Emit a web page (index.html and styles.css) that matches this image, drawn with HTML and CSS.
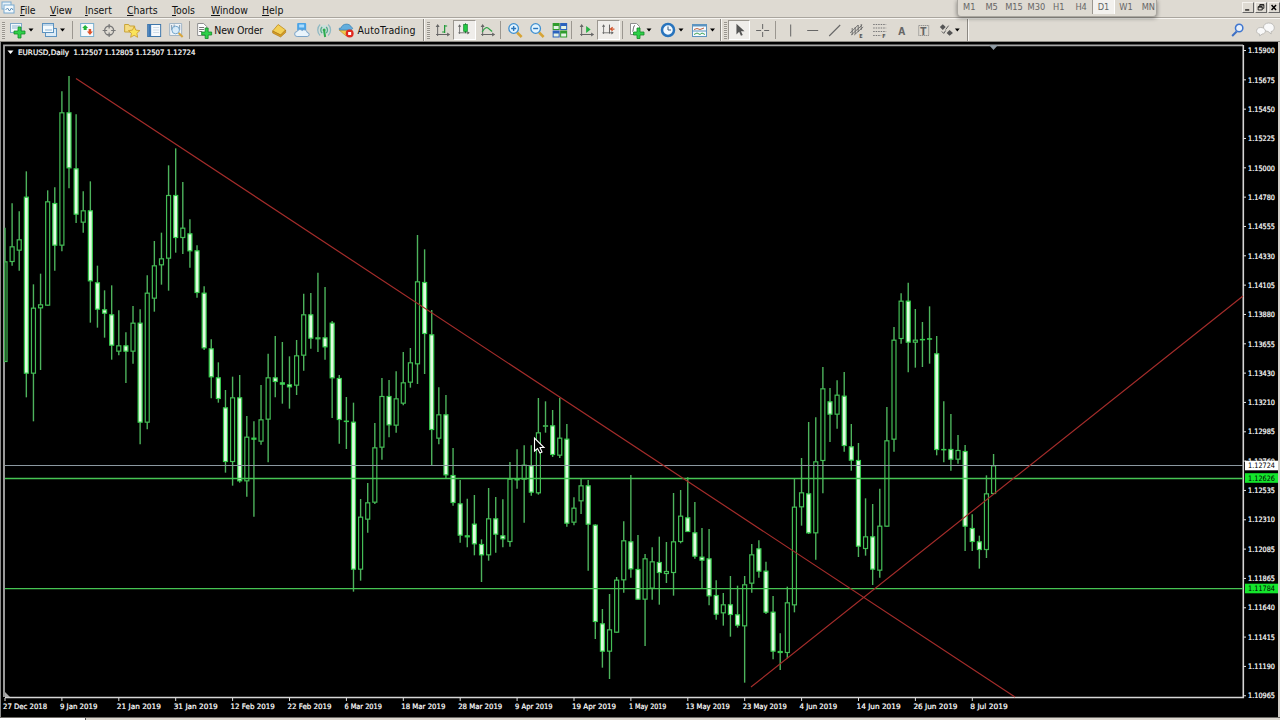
FILE: index.html
```html
<!DOCTYPE html>
<html lang="en">
<head>
  <meta charset="UTF-8" />
  <meta name="viewport" content="width=device-width, initial-scale=1" />
  <title>EURUSD,Daily</title>
  <link rel="stylesheet" href="styles.css">
</head>
<body>
  <div class="terminal">
    <nav class="menubar">
      <svg class="app-icon" viewBox="0 0 14 14">
        <rect x="1" y="1" width="9" height="7" fill="#e8f3fa" stroke="#79a9cf"/>
        <rect x="3" y="4" width="10" height="8" fill="#f4fafd" stroke="#79a9cf"/>
        <path d="M4.500 9l2-2 2 3 2-3 1.500 2" fill="none" stroke="#5b8db8"/>
      </svg>
      <span class="menu m-file"><u>F</u>ile</span>
      <span class="menu m-view"><u>V</u>iew</span>
      <span class="menu m-insert"><u>I</u>nsert</span>
      <span class="menu m-charts"><u>C</u>harts</span>
      <span class="menu m-tools"><u>T</u>ools</span>
      <span class="menu m-window"><u>W</u>indow</span>
      <span class="menu m-help"><u>H</u>elp</span>
      <div class="win-buttons">
        <svg viewBox="0 0 12 11"><path d="M2.500 8.500h5" stroke="#000" stroke-width="1.500"/></svg>
        <svg viewBox="0 0 12 11"><path d="M4.500 4V2h5v4.500H8M2.500 4.500h5v4h-5zM2.500 5h5M4.500 2.500h5" fill="none" stroke="#000"/></svg>
        <svg viewBox="0 0 12 11"><path d="M3 2.500l5.500 6M8.500 2.500l-5.500 6" stroke="#000" stroke-width="1.800"/></svg>
      </div>
    </nav>

    <div class="toolbar">
      <div class="group g-files">
        <i class="grip"></i>
        <svg class="drop" viewBox="0 0 32 22">
          <rect x="4.500" y="4.500" width="11" height="9" fill="#f3f9fc" stroke="#7fa8c8"/>
          <path d="M6 7h8M6 9h5" stroke="#8fb4d0"/>
          <path d="M12 8h3v4h4v3h-4v4h-3v-4H8v-3h4z" fill="#2fd04a" stroke="#128a26" stroke-width=".8"/>
          <path d="M22.500 9.500h5l-2.500 3z"/>
        </svg>
        <svg class="drop" viewBox="0 0 32 22">
          <rect x="7.500" y="9.500" width="11" height="8" fill="#dcebf6" stroke="#5d93c0"/>
          <rect x="4.500" y="4.500" width="11" height="9" fill="#f4fafd" stroke="#5d93c0"/>
          <path d="M5 6h10M7 11h7" stroke="#8ab4d6"/>
          <path d="M22 9.500h5l-2.500 3z"/>
        </svg>
      </div>
      <div class="group g-panels">
        <i class="sep"></i>
        <svg class="tool" viewBox="0 0 22 22">
          <rect x="4.500" y="4.500" width="13" height="13" fill="#f7fbfd" stroke="#7db0cf"/>
          <path d="M9 6l3 3h-1.500v2h-3V9H6z" fill="#22b53a"/>
          <path d="M12.500 10h2.500v2.500h1.800L13.800 16l-3-3.500h1.700z" fill="#e0522a"/>
        </svg>
        <svg class="tool" viewBox="0 0 22 22">
          <circle cx="11" cy="11.500" r="4.500" fill="none" stroke="#777" stroke-width="1.300"/>
          <path d="M11 5v4.500M11 13.500V18M4.500 11.500H9M13 11.500h4.500" stroke="#777" stroke-width="1.200"/>
        </svg>
        <svg class="tool" viewBox="0 0 22 22">
          <path d="M3.500 5.500h4l1 1.500h5v6h-10z" fill="#f5dc82" stroke="#c9a437"/>
          <path d="M13 7.500l1.700 3.600 4 .5-3 2.700.8 4-3.500-2-3.500 2 .8-4-3-2.700 4-.5z" fill="#fbe45b" stroke="#c9982a" stroke-width=".8"/>
        </svg>
        <svg class="tool" viewBox="0 0 22 22">
          <rect x="4.500" y="5.500" width="13" height="12" fill="#f7fafd" stroke="#3f77ab"/>
          <rect x="5" y="6" width="3" height="11" fill="#3d78b5"/>
          <path d="M10 8.500h6M10 11h6M10 13.500h6" stroke="#cfdce8"/>
        </svg>
        <svg class="tool" viewBox="0 0 22 22">
          <path d="M4.500 4.500h12v12h-12z" fill="#eef3f7" stroke="#a2b6c6"/>
          <path d="M6.500 6v5M9 5.500v4M14.500 6v5" stroke="#7d98ae"/>
          <circle cx="10.500" cy="11" r="3.800" fill="#d2eafa" fill-opacity=".8" stroke="#74a6cc"/>
          <path d="M13.500 14l4 4" stroke="#d7a53c" stroke-width="2"/>
        </svg>
      </div>
      <div class="group g-trade">
        <i class="sep"></i>
        <svg class="tool" viewBox="0 0 22 22">
          <path d="M4.500 4.500h6l3 3v9h-9z" fill="#fff" stroke="#8f8f8f"/>
          <path d="M6 8.500h5M6 10.500h5M6 12.500h3" stroke="#777"/>
          <path d="M12 9h3v4h3.500v3H15v3.500h-3V16H8.500v-3H12z" fill="#2fd04a" stroke="#128a26" stroke-width=".8"/>
        </svg>
        <span class="label l-order">New Order</span>
        <svg class="tool" viewBox="0 0 22 22">
          <path d="M4.500 12l5.500-6.500 7.500 5.500-5 5z" fill="#f3cf55" stroke="#bd8a1c" stroke-width=".8"/>
          <path d="M4.500 12l8 4 5-5v2.500L12.500 18l-8-4z" fill="#d99e22" stroke="#a8761a" stroke-width=".6"/>
        </svg>
        <svg class="tool" viewBox="0 0 22 22">
          <rect x="6" y="4" width="9" height="8" rx="1" fill="#4ca4e6"/>
          <path d="M8 5.500h5v3H8z" fill="#a8dcff"/>
          <path d="M6 17.500a2.500 2.500 0 010-5 3 3 0 015-1 3 3 0 015 2 2 2 0 010 4z" fill="#eaf4fb" stroke="#6f9cc4" stroke-width=".9"/>
        </svg>
        <svg class="tool" viewBox="0 0 22 22" fill="none" stroke-width="1.300">
          <circle cx="11" cy="11" r="5" fill="#c9e0dc"/>
          <path d="M7 5.500a7.500 7.500 0 000 11M15 5.500a7.500 7.500 0 010 11" stroke="#8fb9c4"/>
          <path d="M9 8a4 4 0 000 6M13 8a4 4 0 010 6" stroke="#58a98a"/>
          <circle cx="11" cy="11" r="1.500" fill="#2eab4c"/>
          <path d="M11 12l1 6" stroke="#2eab4c" stroke-width="2"/>
        </svg>
        <svg class="tool" viewBox="0 0 22 22">
          <path d="M4 11l7 6 6-6z" fill="#f1c84a" stroke="#bc9127" stroke-width=".7"/>
          <path d="M6 9c1-5 9-5 10-1 3 1 1 3-2 3H6c-3 0-3-2 0-2z" fill="#63aede" stroke="#3b7fb0" stroke-width=".7"/>
          <circle cx="14.500" cy="14.500" r="4" fill="#df2a20"/>
          <rect x="13" y="13" width="3" height="3" fill="#fff"/>
        </svg>
        <span class="label l-auto">AutoTrading</span>
      </div>
      <div class="group g-types">
        <i class="edge"></i><i class="grip"></i>
        <svg class="tool" viewBox="0 0 22 22">
          <use href="#axes"/>
          <path d="M13.500 6v8M13.500 7h2.500M11 13h2.500" stroke="#1d9a36" stroke-width="1.200"/>
        </svg>
        <svg class="tool active" viewBox="1 1 20 20">
          <use href="#axes"/>
          <path d="M12.500 3.500v11" stroke="#12802a"/>
          <rect x="10.500" y="5" width="4" height="7.500" fill="#22cc44" stroke="#12802a" stroke-width=".8"/>
        </svg>
        <svg class="tool" viewBox="0 0 22 22">
          <use href="#axes"/>
          <path d="M6 13q4-7 7-3l3 2.500" fill="none" stroke="#2da545" stroke-width="1.200"/>
        </svg>
      </div>
      <div class="group g-zoom">
        <i class="sep"></i>
        <svg class="tool" viewBox="0 0 22 22">
          <path d="M13 13.500l4.500 4.500" stroke="#d7a436" stroke-width="2.500"/>
          <circle cx="9.500" cy="9.500" r="4.800" fill="#e2f4ff" stroke="#3e8fd0" stroke-width="1.300"/>
          <path d="M7 9.500h5M9.500 7v5" stroke="#2a76bb" stroke-width="1.400"/>
        </svg>
        <svg class="tool" viewBox="0 0 22 22">
          <path d="M13 13.500l4.500 4.500" stroke="#d7a436" stroke-width="2.500"/>
          <circle cx="9.500" cy="9.500" r="4.800" fill="#e2f4ff" stroke="#3e8fd0" stroke-width="1.300"/>
          <path d="M7 9.500h5" stroke="#2a76bb" stroke-width="1.400"/>
        </svg>
        <svg class="tool" viewBox="0 0 22 22">
          <path d="M3.500 4h7v7h-7zM11 11.500h7v7h-7z" fill="#2f9c2c"/>
          <path d="M11 4h7v7h-7zM3.500 11.500h7v7h-7z" fill="#2a62bd"/>
          <path d="M4.500 7h5v3h-5zM12 7h5v3h-5zM4.500 14.500h5v3h-5zM12 14.500h5v3h-5z" fill="#e4f3e4"/>
        </svg>
      </div>
      <div class="group g-scroll">
        <i class="sep"></i>
        <svg class="tool" viewBox="0 0 22 22">
          <use href="#axes"/>
          <path d="M11 7l4.500 3.500L11 14z" fill="#27b243"/>
        </svg>
        <svg class="tool active" viewBox="1 1 20 20">
          <use href="#axes"/>
          <path d="M12.500 5v10" stroke="#555"/>
          <path d="M18 10h-4M16 8l-2.500 2 2.500 2" fill="none" stroke="#d2532a" stroke-width="1.300"/>
        </svg>
      </div>
      <div class="group g-tpl">
        <i class="sep"></i>
        <svg class="drop" viewBox="0 0 32 22">
          <path d="M4.500 4.500h6l3 3v8h-9z" fill="#fff" stroke="#8f8f8f"/>
          <path d="M9 6.500c-2 0-1.500 6-2.500 6" fill="none" stroke="#555"/>
          <path d="M11 9h3v4h4v3h-4v3.500h-3V16H7.500v-3H11z" fill="#2fd04a" stroke="#128a26" stroke-width=".8"/>
          <path d="M20.500 9.500h5l-2.500 3z"/>
        </svg>
        <svg class="drop" viewBox="0 0 32 22">
          <circle cx="10" cy="11" r="6" fill="#f2f9ff" stroke="#2874bd" stroke-width="2.500"/>
          <path d="M10 7.500V11h3" fill="none" stroke="#3b5a78"/>
          <path d="M20.500 9.500h5l-2.500 3z"/>
        </svg>
        <svg class="drop" viewBox="0 0 32 22">
          <rect x="2.500" y="5.500" width="14" height="12" fill="#f5fafd" stroke="#5c94c0"/>
          <path d="M3 6.500h13" stroke="#5c94c0" stroke-width="2"/>
          <path d="M4 10.500l3-1 3 1 4-1.500" stroke="#c0623d" fill="none"/>
          <path d="M3 12h13" stroke="#5c94c0"/>
          <path d="M4 15.500l3-1.500 3 1.500 2-1.500 3 1.500" stroke="#3fa357" fill="none"/>
          <path d="M20 9.500h5l-2.500 3z"/>
        </svg>
      </div>
      <div class="group g-cursor">
        <i class="edge"></i><i class="grip"></i>
        <svg class="tool active" viewBox="1 1 20 20">
          <path d="M8 4v12l3-3 2 4.500 2-1-2-4h4z" fill="#555"/>
        </svg>
        <svg class="tool" viewBox="0 0 22 22">
          <path d="M12.500 5v5M12.500 13v5M6 11.500h5M14 11.500h5" stroke="#666"/>
        </svg>
      </div>
      <div class="group g-draw">
        <i class="sep"></i>
        <svg class="tool" viewBox="0 0 22 22"><path d="M11.500 5.500v12" stroke="#666"/></svg>
        <svg class="tool" viewBox="0 0 22 22"><path d="M6 11.500h11" stroke="#666"/></svg>
        <svg class="tool" viewBox="0 0 22 22"><path d="M5 17L16 6" stroke="#666" stroke-width="1.100"/></svg>
        <svg class="tool" viewBox="0 0 22 22">
          <path d="M4 14l8-8M5 16l11-10M8 16l9-8M6 9v7M9 8v7M12 6v7M15 5v6" stroke="#666" stroke-width=".9"/>
          <text x="13" y="18.500" class="tiny">E</text>
        </svg>
        <svg class="tool" viewBox="0 0 22 22">
          <path d="M4 5.500h13M4 9h13M4 12.500h13M4 16.500h8" stroke="#777" stroke-dasharray="1.500 1"/>
          <text x="13" y="19" class="tiny">F</text>
        </svg>
        <svg class="tool" viewBox="0 0 22 22"><text x="7" y="15.500" class="glyph">A</text></svg>
        <svg class="tool" viewBox="0 0 22 22">
          <rect x="5.500" y="6.500" width="10" height="10" fill="none" stroke="#777" stroke-dasharray="1 1"/>
          <text x="7" y="15.500" class="glyph">T</text>
        </svg>
        <svg class="drop" viewBox="0 0 32 22">
          <path d="M7 5l3 3-3 3-3-3zM14 11l3.500 3-3.500 3-3-3z" fill="#555"/>
          <path d="M13 6.500l-3 4M6 12.500l2 2 2-3" stroke="#555" fill="none"/>
          <path d="M19.500 9.500h5l-2.500 3z"/>
        </svg>
        <i class="edge"></i>
      </div>
      <div class="search">
        <svg class="tool" viewBox="0 0 22 22">
          <path d="M9.500 12.500L5 17" stroke="#3d6fc4" stroke-width="2"/>
          <circle cx="12" cy="9" r="3.700" fill="#e7f0fb" stroke="#3f76cf" stroke-width="1.500"/>
        </svg>
        <svg class="tool" viewBox="0 0 22 22" fill="#f9f9f9" stroke="#b4b2ae" stroke-width=".8">
          <path d="M14.500 4c7 0 7 8 2.500 8.500V15l-3-2.500C7.500 12 8 4 14.500 4z"/>
          <path d="M6.500 8.500c6 0 6 6.500 1.500 6.500l-2.500 2V15c-4.500-.5-4-6.500 1-6.500z"/>
        </svg>
      </div>
    </div>

    <div class="periods">
      <span>M1</span><span>M5</span><span>M15</span><span>M30</span><span>H1</span><span>H4</span><span class="on">D1</span><span>W1</span><span>MN</span>
    </div>

    <div class="chart-window">
      <svg id="chart" class="chart" viewBox="0 42 1280 675">
        <path class="border" d="M4 697V45.300H1243"/>
        <path class="axis" d="M5 697.500H1243.300V45"/>
        <path d="M989 45h9l-4.500 5z" fill="#8f9aa2"/>
        <path d="M5 692l5 5H5z" fill="#aaa"/>
        <path d="M7.500 50.500h6l-3 3.500z" fill="#fff"/>
        <g id="candles"></g>
        <path class="bid" d="M5 465.500H1243"/>
        <path class="level" d="M5 478.500H1243M5 588.700H1243"/>
        <path class="trend" d="M76 78.500L1015 697M751 687L1243 296"/>
        <g id="scale"></g>
        <text x="18" y="55" class="title" textLength="51" lengthAdjust="spacingAndGlyphs">EURUSD,Daily</text>
        <text x="73.500" y="55" class="title" textLength="122" lengthAdjust="spacingAndGlyphs">1.12507 1.12805 1.12507 1.12724</text>
        <path class="pointer" d="M534.500 438v13l3-2.500 2.500 4.500 2-1-2-4.500h4z"/>
      </svg>
    </div>
    <div class="tabs"><div class="tab"></div></div>
  </div>

  <svg class="defs">
    <symbol id="axes" viewBox="0 0 22 22">
      <path d="M6.500 6v11M5 15.500h13" stroke="#666"/>
      <path d="M4.500 8l2-3 2 3zM16 13.500l3 2-3 2z" fill="#666"/>
    </symbol>
  </svg>
  <script src="chart.js"></script>
</body>
</html>
```

FILE: styles.css
```css
body {
  margin: 0;
  overflow: hidden;
  background: #dcd8d0;
  font-family: "DejaVu Sans Condensed", "DejaVu Sans", sans-serif;
  color: #111;
}
.terminal {
  position: relative;
  width: 1280px;
  height: 720px;
  display: flex;
  flex-direction: column;
}
.menubar {
  display: flex;
  align-items: center;
  height: 18px;
  box-sizing: border-box;
  font-size: 10.4px;
  background: #dedad2;
  border-bottom: 1px solid #aaa69f;
  flex: none;
}
.app-icon {
  width: 14px;
  height: 14px;
  margin: -2px 5px 0 1px;
}
.menu {
  padding-top: 2px;
  white-space: nowrap;
}
.menu u {
  text-underline-offset: 1px;
}
.m-file { width: 30px; }
.m-view { width: 35px; }
.m-insert { width: 42px; }
.m-charts { width: 45px; }
.m-tools { width: 39px; }
.m-window { width: 51px; }
.win-buttons {
  display: flex;
  gap: 1px;
  margin: -2px 0 0 auto;
}
.win-buttons svg {
  width: 12px;
  height: 11px;
  box-sizing: border-box;
  border-right: 1px solid #666;
  border-bottom: 1px solid #666;
  border-top: 1px solid #f5f3ef;
  border-left: 1px solid #f5f3ef;
}
.toolbar {
  display: flex;
  height: 24px;
  box-sizing: border-box;
  flex: none;
  background: #dedad2;
  border-top: 1px solid #f7f5f1;
  border-bottom: 1px solid #8e8b85;
}
.group {
  display: flex;
  align-items: center;
  flex: none;
}
.g-files { width: 70px; }
.g-panels { width: 117px; }
.g-trade { width: 236px; }
.g-types { width: 75px; }
.g-zoom { width: 71px; }
.g-scroll { width: 51px; }
.g-tpl { width: 100px; }
.g-cursor { width: 53px; }
.g-draw { width: 195px; }
.grip {
  width: 3px;
  height: 17px;
  margin: 0 1px 0 2px;
  background: repeating-linear-gradient(#99958e 0 1px, #e6e3dc 1px 2px);
  flex: none;
}
.sep {
  width: 1px;
  height: 18px;
  margin: 0 3px 0 2px;
  background: #9b9790;
  flex: none;
}
.edge {
  width: 1px;
  height: 22px;
  background: #8b8882;
  border-right: 1px solid #f8f6f2;
  flex: none;
}
.tool {
  width: 22.3px;
  height: 22px;
  flex: none;
}
.drop {
  width: 32px;
  height: 22px;
  flex: none;
}
.active {
  height: 20px;
  box-sizing: border-box;
  background: #efedea;
  border: 1px solid #fff;
  border-top-color: #9b9790;
  border-left-color: #9b9790;
}
.label {
  font-size: 10.5px;
  white-space: nowrap;
  margin-top: -1px;
}
.l-order {
  width: 54px;
  margin-left: -1px;
  letter-spacing: -0.2px;
}
.l-auto {
  letter-spacing: 0.15px;
}
.g-draw .tool { width: 22.4px; }
.g-draw .drop { width: 31px; }
.glyph {
  font: bold 10px "DejaVu Sans Condensed", sans-serif;
  fill: #666;
}
.tiny {
  font: bold 5.5px "DejaVu Sans Condensed", sans-serif;
  fill: #555;
}
.search {
  display: flex;
  gap: 4px;
  margin-left: auto;
  padding-right: 4px;
}
.periods {
  position: absolute;
  left: 957px;
  top: 0;
  width: 200px;
  height: 17px;
  box-sizing: border-box;
  padding-bottom: 2px;
  display: flex;
  background: #dedad2;
  border: 1px solid #aaa7a0;
  border-top: 0;
  border-radius: 0 0 4px 4px;
  box-shadow: 0 1px 4px rgba(0, 0, 0, 0.45);
}
.periods span {
  width: 22.4px;
  flex: none;
  box-sizing: border-box;
  line-height: 13px;
  font-size: 9.2px;
  text-align: center;
  color: #666;
}
.periods .on {
  background: #f3f1ee;
  border-left: 1px solid #9b9790;
  border-right: 1px solid #fff;
}
.chart-window {
  height: 675px;
  box-sizing: border-box;
  background: #000;
  border-right: 2px solid #d0cdc6;
  border-left: 1px solid #8a8a8a;
  flex: none;
  overflow: hidden;
}
.chart {
  display: block;
  width: 1280px;
  height: 675px;
  margin-left: -1px;
}
.chart text {
  font-family: "DejaVu Sans Condensed", "DejaVu Sans", sans-serif;
  font-size: 7.4px;
  fill: #fff;
  stroke: #fff;
  stroke-width: 0.2px;
}
.chart text.dark {
  fill: #000;
  stroke: none;
}
.border {
  fill: none;
  stroke: #a9a9a9;
  stroke-width: 1.8px;
}
.axis {
  fill: none;
  stroke: #d6d6d6;
  stroke-width: 1.6px;
}
.tick { stroke: #e0e0e0; }
.wick { stroke: #4db35c; stroke-width: 1.4px; }
.up { fill: #000; stroke: #43bd55; stroke-width: 1.2px; }
.down { fill: #e0fbe0; stroke: #35cc4c; stroke-width: 1.2px; }
.bid { stroke: #8b98a0; }
.level { stroke: #46c453; stroke-width: 1.3px; }
.trend { stroke: #a32c2a; stroke-width: 1.2px; fill: none; }
.pointer { fill: #000; stroke: #fff; stroke-width: 1.1px; }
.tabs {
  height: 3px;
  background: #dcd8d0;
  border-top: 1px solid #6d6b67;
  box-sizing: border-box;
  flex: none;
}
.tab {
  width: 85px;
  height: 2px;
  background: #fff;
  border-right: 1px solid #555;
}
.defs {
  display: none;
}
```

FILE: chart.js
```js
// bars: [high, body top, body bottom, low, filled], in thirds of a pixel below y
const series = [
  { y: 60, bars: [
    [503,604,906,906,0],[430,559,606,617,0],[454,538,572,632,0],[334,410,941,1012,1],
    [673,743,941,1084,0],[641,733,745,930,0],[391,424,737,737,0],[382,429,557,632,1],
    [94,157,557,574,0],[48,157,325,385,1],[163,325,464,489,1],[394,451,488,518,0],
    [364,451,664,788,1],[617,667,749,803,1],[691,748,761,833,1],[676,763,857,899,1],
    [751,856,875,886,0],[817,856,875,969,1],[738,788,875,911,0],[748,788,1088,1153,1],
    [646,698,1088,1108,0],[543,616,716,755,0],[518,595,616,674,0],[316,405,596,692,0],
    [265,405,534,578,1],[366,503,534,582,0],[478,520,574,623,1],[556,571,699,713,1],
    [679,698,865,870,1],[838,865,952,1015,1],[907,952,1017,1028,1]
  ]},
  { y: 260, bars: [
    [390,442,606,638,1],[350,412,606,677,0],[345,412,664,668,1],[468,530,664,710,0],
    [484,533,539,770,1],[375,478,545,554,0],[281,352,479,607,0],[228,352,366,412,1],
    [246,367,374,431,1],[289,373,382,446,1],[240,286,377,405,0],[101,163,287,332,0],
    [99,163,236,266,1],[38,232,238,276,0],[81,232,262,299,1],[183,188,355,474,1],
    [345,354,480,551,1],[411,482,486,567,1],[428,485,929,995,1],[717,770,929,962,0],
    [669,727,779,818,0],[489,562,728,732,0],[354,408,563,599,0],[360,408,496,532,1],
    [334,415,497,518,0],[276,367,431,436,0],[264,307,368,383,0]
  ]},
  { y: 220, bars: [
    [45,184,433,492,0],[88,186,342,462,1],[270,343,630,735,1],[502,583,656,673,0],
    [525,583,766,774,1],[684,765,849,857,1],[780,850,947,968,1],[836,946,952,982,1],
    [825,911,973,1006,1],[958,972,1006,1086,1],[804,895,1006,1022,0],[831,895,944,998,1],
    [838,946,958,982,1],[726,776,966,980,0],[688,777,781,806,1],[676,734,779,908,0],
    [676,736,818,827,1],[534,637,820,824,0],[544,616,620,638,0],[570,616,705,711,1],
    [534,653,707,714,0],[612,656,911,920,1],[832,863,908,916,0],[777,796,844,882,0],
    [780,796,914,1052,1]
  ]},
  { y: 460, bars: [
    [193,194,486,537,1],[447,490,575,623,1],[402,508,575,657,0],[351,359,518,518,0],
    [184,241,361,398,0],[45,244,328,353,1],[225,327,419,419,1],[282,295,419,558,0],
    [262,304,386,419,0],[230,306,339,434,1],[246,333,342,369,0],[99,244,339,407,0],
    [90,167,246,250,0],[52,172,216,216,1],[126,217,290,296,1],[204,290,302,384,1],
    [207,295,409,436,1],[361,405,464,479,1],[399,433,460,497,0],[348,433,465,530,1],
    [377,463,497,503,1],[348,373,499,668,0],[252,283,371,398,0],[241,265,335,353,1],
    [305,332,458,462,1],[408,455,575,598,1],[520,573,579,630,1],[380,427,579,595,0],
    [56,140,436,457,0]
  ]},
  { y: 270, bars: [
    [564,667,712,767,0],[456,670,790,792,1],[442,574,790,869,0],[291,355,573,670,0],
    [354,394,434,516,1],[331,374,434,476,0],[306,377,528,545,1],[462,529,572,602,1],
    [519,570,830,861,1],[685,799,837,857,0],[702,799,899,945,1],[656,767,902,923,0],
    [411,511,770,770,0],[171,209,509,545,0],[70,92,207,221,0],[38,92,218,307,1],
    [117,209,218,293,0],[156,207,210,291,1],[109,205,208,281,1],[198,250,540,556,1],
    [394,537,539,577,1],[432,537,569,602,1],[495,540,569,581,0],[525,543,770,843,1],
    [733,774,816,843,1],[797,814,840,896,1],[616,670,840,864,0],[552,586,672,672,0]
  ]}
];

let candles = '';
let n = 0;
series.forEach(part => {
  part.bars.forEach(([high, top, bottom, low, filled]) => {
    const x = 5 + n * 7.112;
    const y = v => (part.y + v / 3).toFixed(2);
    const left = Math.max(x - 2, 4.9);
    const height = Math.max((bottom - top) / 3 - 1, 0.3);
    candles += `<path class="wick" d="M${x} ${y(high)}V${y(low)}"/>`;
    candles += `<rect class="${filled ? 'down' : 'up'}" x="${left}" y="${y(top + 1.5)}" width="${x + 2 - left}" height="${height}"/>`;
    n++;
  });
});
document.getElementById('candles').innerHTML = candles;

const prices = ['1.15900', '1.15675', '1.15450', '1.15225', '1.15000', '1.14780', '1.14555', '1.14330',
  '1.14105', '1.13880', '1.13655', '1.13430', '1.13210', '1.12985', '1.12760', '1.12535', '1.12310',
  '1.12085', '1.11865', '1.11640', '1.11415', '1.11190', '1.10965'];
const dates = ['27 Dec 2018', '9 Jan 2019', '21 Jan 2019', '31 Jan 2019', '12 Feb 2019', '22 Feb 2019',
  '6 Mar 2019', '18 Mar 2019', '28 Mar 2019', '9 Apr 2019', '19 Apr 2019', '1 May 2019', '13 May 2019',
  '23 May 2019', '4 Jun 2019', '14 Jun 2019', '26 Jun 2019', '8 Jul 2019'];

let scale = '';
const priceText = (y, text, cls) =>
  `<text class="${cls}" x="1248" y="${y}" textLength="27" lengthAdjust="spacingAndGlyphs">${text}</text>`;
prices.forEach((p, i) => {
  const y = 50.5 + i * 29.33;
  scale += `<path class="tick" d="M1243 ${y}h3"/>` + priceText(y + 2.7, p, '');
});
dates.forEach((d, i) => {
  const x = 5 + i * 56.9;
  scale += `<path class="tick" d="M${x} 698v3"/>`;
  scale += `<text x="${x - 2}" y="709" textLength="${d.length * 4.1 - (d.length < 11 ? 3.5 : 1)}" lengthAdjust="spacingAndGlyphs">${d}</text>`;
});

// current price and level tags
[[465.5, '1.12724', '#fff'], [478, '1.12626', '#14e62c'], [588.5, '1.11784', '#14e62c']].forEach(([y, p, color]) => {
  scale += `<rect x="1245" y="${y - 4.8}" width="33" height="9.6" fill="${color}"/>` + priceText(y + 2.8, p, 'dark');
});
document.getElementById('scale').innerHTML = scale;
```
